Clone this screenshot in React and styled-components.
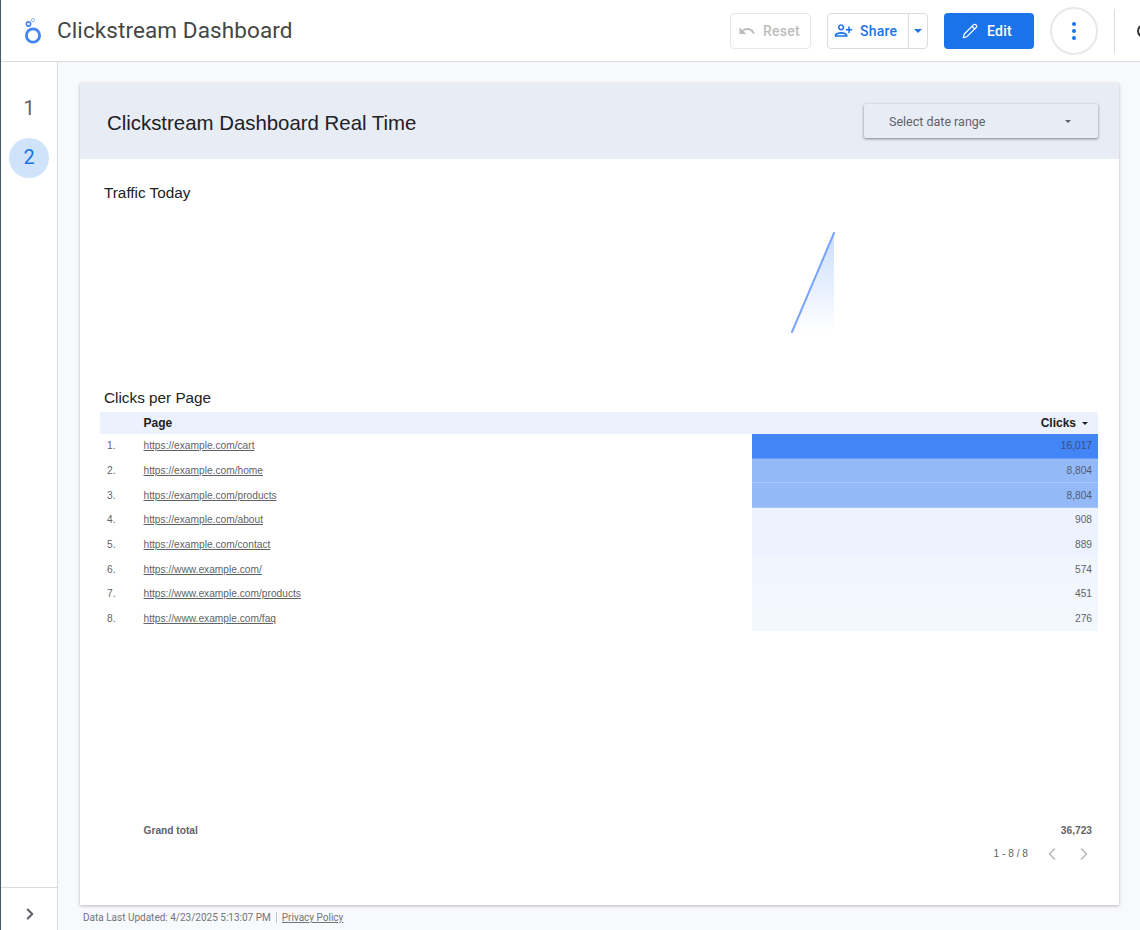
import React from 'react';
import styled, { createGlobalStyle } from 'styled-components';
import { ChevronLeft, ChevronRight, Pencil } from 'lucide-react';

const rows = [
  { rank: 1, page: 'https://example.com/cart', clicks: '16,017', tint: '#4285f7', ink: '#3a4f78' },
  { rank: 2, page: 'https://example.com/home', clicks: '8,804', tint: '#94b9f9', ink: '#505c74' },
  { rank: 3, page: 'https://example.com/products', clicks: '8,804', tint: '#94b9f9', ink: '#505c74' },
  { rank: 4, page: 'https://example.com/about', clicks: '908', tint: '#edf3fe', ink: '#5f6368' },
  { rank: 5, page: 'https://example.com/contact', clicks: '889', tint: '#edf3fe', ink: '#5f6368' },
  { rank: 6, page: 'https://www.example.com/', clicks: '574', tint: '#f0f5fe', ink: '#5f6368' },
  { rank: 7, page: 'https://www.example.com/products', clicks: '451', tint: '#f2f6fe', ink: '#5f6368' },
  { rank: 8, page: 'https://www.example.com/faq', clicks: '276', tint: '#f3f7fe', ink: '#5f6368' },
];

const GlobalStyle = createGlobalStyle`
  html, body {
    margin: 0;
    padding: 0;
    height: 100%;
    overflow: hidden;
    background: #fff;
  }
`;

const Page = styled.div`
  width: 1140px;
  height: 930px;
  box-sizing: border-box;
  border-left: 1px solid #4b5763;
  display: flex;
  flex-direction: column;
  font-family: "Liberation Sans", Arial, sans-serif;
  overflow: hidden;
`;

const TopBar = styled.header`
  flex: none;
  height: 62px;
  box-sizing: border-box;
  border-bottom: 1px solid #dadce0;
  display: flex;
  align-items: center;
  padding: 0 0 0 21px;
  background: #fff;
`;

const Logo = styled.svg`
  width: 22px;
  height: 28px;
  flex: none;
`;

const ReportName = styled.h1`
  margin: 0 0 2px 13px;
  font-family: Roboto, sans-serif;
  font-size: 22.5px;
  font-weight: 400;
  letter-spacing: 0.1px;
  color: #444746;
  flex: 1;
  min-width: 0;
`;

const ActionIcon = styled.svg`
  width: ${(p) => p.$size}px;
  height: ${(p) => p.$size}px;
  flex: none;
  fill: currentColor;
  transform: ${(p) => (p.$flip ? 'scaleX(-1)' : 'none')};
`;

const OutlineButton = styled.button`
  height: 36px;
  flex: none;
  box-sizing: border-box;
  border: 1px solid #dadce0;
  border-radius: 4px;
  background: #fff;
  display: flex;
  align-items: center;
  padding: 0;
  font-family: Roboto, sans-serif;
  font-size: 14px;
  font-weight: 500;
  letter-spacing: 0.25px;
  color: ${(p) => (p.$muted ? '#bdbdbd' : '#1a73e8')};
`;

const ResetButton = styled(OutlineButton)`
  width: 81px;
  padding-left: 7px;
  gap: 7px;
  border-color: #e6e7e9;
`;

const ShareGroup = styled(OutlineButton)`
  width: 101px;
  margin-left: 16px;
`;

const ShareLabel = styled.span`
  width: 81px;
  height: 100%;
  display: flex;
  align-items: center;
  gap: 7px;
  padding-left: 6px;
  box-sizing: border-box;
  border-right: 1px solid #dadce0;
`;

const ShareCaret = styled.span`
  flex: 1;
  display: flex;
  justify-content: center;
`;

const CaretDown = styled.span`
  width: 0;
  height: 0;
  border-left: ${(p) => p.$size}px solid transparent;
  border-right: ${(p) => p.$size}px solid transparent;
  border-top: ${(p) => p.$size}px solid ${(p) => p.$color};
`;

const EditButton = styled.button`
  width: 90px;
  height: 36px;
  flex: none;
  margin-left: 16px;
  border: 0;
  border-radius: 4px;
  background: #1a73e8;
  color: #fff;
  display: flex;
  align-items: center;
  gap: 9px;
  padding: 0 0 0 18px;
  font-family: Roboto, sans-serif;
  font-size: 14px;
  font-weight: 500;
  letter-spacing: 0.25px;
`;

const MoreButton = styled.button`
  width: 48px;
  height: 48px;
  flex: none;
  margin-left: 16px;
  box-sizing: border-box;
  border: 2px solid #e8e8e8;
  border-radius: 50%;
  background: #fff;
  display: flex;
  flex-direction: column;
  align-items: center;
  justify-content: center;
  gap: 3px;
  padding: 0;
`;

const Dot = styled.span`
  width: 4px;
  height: 4px;
  border-radius: 50%;
  background: #1a73e8;
`;

const BarDivider = styled.span`
  width: 1px;
  height: 44px;
  flex: none;
  margin-left: 16px;
  background: #dadce0;
`;

const Avatar = styled.span`
  width: 14px;
  height: 14px;
  margin: 0 -11px 0 22px;
  flex: none;
  box-sizing: border-box;
  border: 2px solid #333;
  border-radius: 50%;
`;

const Body = styled.div`
  flex: 1;
  min-height: 0;
  display: flex;
`;

const PageNav = styled.nav`
  flex: none;
  width: 56px;
  border-right: 1px solid #dadce0;
  display: flex;
  flex-direction: column;
  background: #fff;
`;

const PageList = styled.div`
  flex: 1;
  display: flex;
  flex-direction: column;
  align-items: center;
  padding-top: 26px;
`;

const PageNumber = styled.div`
  width: 40px;
  height: 40px;
  box-sizing: border-box;
  margin-bottom: ${(p) => (p.$active ? 0 : 10)}px;
  padding-bottom: ${(p) => (p.$active ? 2 : 0)}px;
  border-radius: 50%;
  display: flex;
  align-items: center;
  justify-content: center;
  font-family: Roboto, sans-serif;
  font-size: 20px;
  color: ${(p) => (p.$active ? '#1a73e8' : '#5f6368')};
  background: ${(p) => (p.$active ? '#cfe4fb' : 'transparent')};
`;

const NavFooter = styled.div`
  flex: none;
  height: 43px;
  box-sizing: border-box;
  border-top: 1px solid #dadce0;
  display: flex;
  align-items: center;
  justify-content: center;
  color: #5f6368;
  padding: 10px 0 0 2px;
`;

const Main = styled.main`
  flex: 1;
  min-width: 0;
  background: #f8f9fd;
  padding: 21px 21px 0 22px;
  display: flex;
  flex-direction: column;
`;

const Canvas = styled.section`
  height: 822px;
  flex: none;
  background: #fff;
  box-shadow: 0 1px 3px rgba(60, 64, 67, 0.35);
  display: flex;
  flex-direction: column;
`;

const Banner = styled.div`
  flex: none;
  height: 76px;
  background: #e8ecf5;
  display: flex;
  align-items: center;
  justify-content: space-between;
  padding: 5px 21px 0 27px;
  box-sizing: border-box;
`;

const BannerTitle = styled.h2`
  margin: 0;
  font-size: 20.4px;
  font-weight: 400;
  color: #202124;
`;

const DateRange = styled.div`
  width: 234px;
  height: 34px;
  margin-top: -5px;
  box-sizing: border-box;
  background: #e8ecf5;
  border-radius: 2px;
  box-shadow: 0 1px 3px rgba(0, 0, 0, 0.45);
  display: flex;
  align-items: center;
  justify-content: space-between;
  padding: 0 27px 0 25px;
  font-family: Roboto, sans-serif;
  font-size: 12.5px;
  color: #5f6368;
`;

const ChartTitle = styled.div`
  margin: ${(p) => p.$top}px 0 0 24px;
  font-size: 15.3px;
  line-height: 17px;
  color: #202124;
`;

const ChartArea = styled.div`
  height: 188px;
  flex: none;
  padding-left: 708px;
`;

const Sparkline = styled.svg`
  display: block;
  margin-top: 30px;
  width: 50px;
  height: 104px;
`;

const Table = styled.div`
  margin: 6px 21px 0 20px;
  display: flex;
  flex-direction: column;
  flex: 1;
  font-size: 10.2px;
`;

const rowGrid = `
  display: grid;
  grid-template-columns: 43.5px 608.5px 346px;
  align-items: center;
`;

const HeadRow = styled.div`
  ${rowGrid}
  height: 22px;
  background: #ebf1fd;
  border-radius: 2px 2px 0 0;
  font-size: 12px;
  font-weight: 700;
  color: #202124;
`;

const HeadClicks = styled.div`
  display: flex;
  justify-content: flex-end;
  align-items: center;
  gap: 6px;
  padding-right: 10px;
`;

const Row = styled.div`
  ${rowGrid}
  height: 24.65px;
`;

const Rank = styled.div`
  padding: 0 0 1px 7px;
  color: #5f6368;
`;

const PageCell = styled.div`
  padding-bottom: 1px;
`;

const PageLink = styled.a`
  color: #5f6368;
  text-decoration: underline;
`;

const ClicksCell = styled.div`
  height: 100%;
  box-sizing: border-box;
  display: flex;
  align-items: center;
  justify-content: flex-end;
  padding-right: 6px;
  color: ${(p) => p.$ink};
  border-bottom: 1px solid rgba(255, 255, 255, 0.2);
  background: ${(p) => p.$tint};
`;

const TotalRow = styled.div`
  ${rowGrid}
  margin-top: auto;
  height: 18px;
  font-weight: 700;
  color: #5f6368;
`;

const TotalValue = styled.div`
  text-align: right;
  padding-right: 6px;
`;

const Pager = styled.div`
  height: 28px;
  display: flex;
  align-items: center;
  justify-content: flex-end;
  padding-bottom: 2px;
  margin-bottom: 36px;
  color: #5f6368;
`;

const PagerText = styled.span`
  margin-right: 10px;
`;

const PagerIcon = styled.span`
  width: 28px;
  margin-left: ${(p) => (p.$spaced ? 4 : 0)}px;
  display: flex;
  justify-content: center;
  color: #b5b7ba;
  padding-top: 1px;
`;

const Footer = styled.footer`
  display: flex;
  align-items: center;
  margin: 7px 0 0 3px;
  font-family: Roboto, sans-serif;
  font-size: 10px;
  color: #70757a;
`;

const FooterLink = styled.a`
  margin-left: 5px;
  padding-left: 5px;
  border-left: 1px solid #c4c7cc;
  text-decoration: underline;
  line-height: 11px;
`;

function App() {
  return (
    <Page>
      <GlobalStyle />
      <TopBar>
        <Logo viewBox="0 0 22 28">
          <circle cx="11" cy="18.5" r="6.6" fill="none" stroke="#4285f4" strokeWidth="2.8" />
          <circle cx="6.5" cy="7" r="2.1" fill="none" stroke="#4285f4" strokeWidth="1.6" />
          <circle cx="11" cy="3.2" r="1.6" fill="none" stroke="#8ab4f8" strokeWidth="1" />
        </Logo>
        <ReportName>Clickstream Dashboard</ReportName>
        <ResetButton $muted>
          <ActionIcon $size={18} viewBox="0 0 24 24">
            <path d="M12.5 8c-2.65 0-5.05.99-6.9 2.6L2 7v9h9l-3.62-3.62c1.39-1.16 3.16-1.88 5.12-1.88 3.54 0 6.55 2.31 7.6 5.5l2.37-.78C21.08 11.03 17.15 8 12.5 8z" />
          </ActionIcon>
          Reset
        </ResetButton>
        <ShareGroup>
          <ShareLabel>
            <ActionIcon $size={19} $flip viewBox="0 0 24 24">
              <path d="M15 12c2.21 0 4-1.79 4-4s-1.79-4-4-4-4 1.79-4 4 1.79 4 4 4zm0-6c1.1 0 2 .9 2 2s-.9 2-2 2-2-.9-2-2 .9-2 2-2zm0 8c-2.67 0-8 1.34-8 4v2h16v-2c0-2.66-5.33-4-8-4zm-6 4c.22-.72 3.31-2 6-2 2.7 0 5.8 1.29 6 2H9zm-3-3v-3h3v-2H6V7H4v3H1v2h3v3h2z" />
            </ActionIcon>
            Share
          </ShareLabel>
          <ShareCaret>
            <CaretDown $size={4} $color="#1a73e8" />
          </ShareCaret>
        </ShareGroup>
        <EditButton>
          <Pencil size={16} strokeWidth={1.8} />
          Edit
        </EditButton>
        <MoreButton>
          <Dot />
          <Dot />
          <Dot />
        </MoreButton>
        <BarDivider />
        <Avatar />
      </TopBar>
      <Body>
        <PageNav>
          <PageList>
            <PageNumber>1</PageNumber>
            <PageNumber $active>2</PageNumber>
          </PageList>
          <NavFooter>
            <ChevronRight size={18} strokeWidth={2.8} />
          </NavFooter>
        </PageNav>
        <Main>
          <Canvas>
            <Banner>
              <BannerTitle>Clickstream Dashboard Real Time</BannerTitle>
              <DateRange>
                Select date range
                <CaretDown $size={3} $color="#5f6368" />
              </DateRange>
            </Banner>
            <ChartTitle $top={25}>Traffic Today</ChartTitle>
            <ChartArea>
              <Sparkline viewBox="0 0 50 104">
                <defs>
                  <linearGradient id="area" x1="0" y1="0" x2="0" y2="1">
                    <stop offset="0" stopColor="#a8c7fa" stopOpacity="0.6" />
                    <stop offset="1" stopColor="#a8c7fa" stopOpacity="0" />
                  </linearGradient>
                </defs>
                <polygon points="46,2 4,101 46,101" fill="url(#area)" />
                <line x1="4" y1="101" x2="46" y2="2" stroke="#7aa5f8" strokeWidth="2" strokeLinecap="round" />
              </Sparkline>
            </ChartArea>
            <ChartTitle $top={0}>Clicks per Page</ChartTitle>
            <Table>
              <HeadRow>
                <span />
                <span>Page</span>
                <HeadClicks>
                  Clicks
                  <CaretDown $size={3} $color="#202124" />
                </HeadClicks>
              </HeadRow>
              {rows.map((row) => (
                <Row key={row.rank}>
                  <Rank>{row.rank}.</Rank>
                  <PageCell>
                    <PageLink>{row.page}</PageLink>
                  </PageCell>
                  <ClicksCell $tint={row.tint} $ink={row.ink}>{row.clicks}</ClicksCell>
                </Row>
              ))}
              <TotalRow>
                <span />
                <span>Grand total</span>
                <TotalValue>36,723</TotalValue>
              </TotalRow>
              <Pager>
                <PagerText>1 - 8 / 8</PagerText>
                <PagerIcon>
                  <ChevronLeft size={20} strokeWidth={1.8} />
                </PagerIcon>
                <PagerIcon $spaced>
                  <ChevronRight size={20} strokeWidth={1.8} />
                </PagerIcon>
              </Pager>
            </Table>
          </Canvas>
          <Footer>
            Data Last Updated: 4/23/2025 5:13:07 PM
            <FooterLink>Privacy Policy</FooterLink>
          </Footer>
        </Main>
      </Body>
    </Page>
  );
}

export default App;
